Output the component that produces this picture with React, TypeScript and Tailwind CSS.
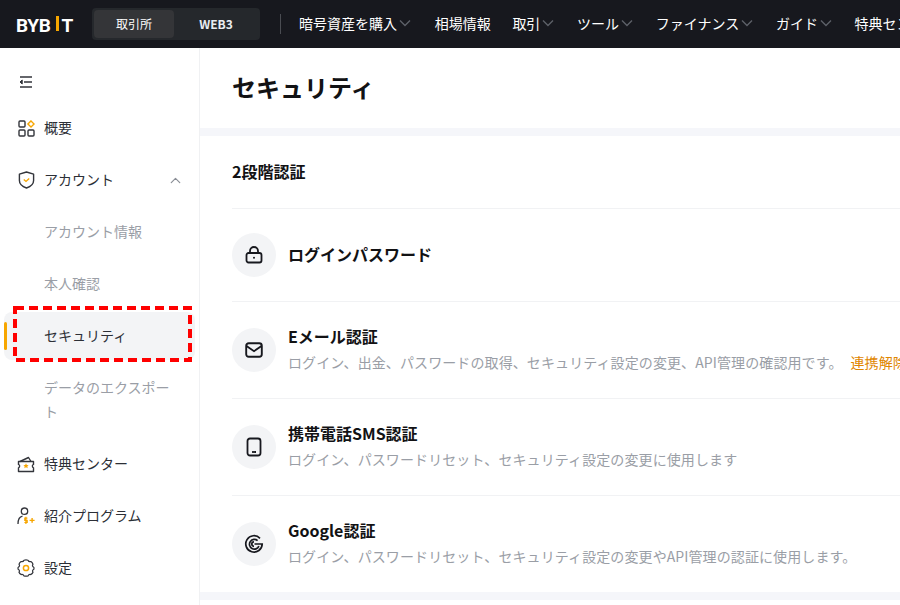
import React from "react";
import { ChevronUp } from "lucide-react";

function NavItem({ label, chevron, className }: { label: string; chevron?: boolean; className?: string }) {
  return (
    <div className={`flex items-center shrink-0 text-white text-[14px] whitespace-nowrap ${className ?? ""}`}>
      <span>{label}</span>
      {chevron && (
        <svg className="ml-[1px] shrink-0" width="14" height="14" viewBox="0 0 14 14" fill="none" stroke="#5d6068" strokeWidth="1.4">
          <path d="M2 4.5 7 9.5 12 4.5" />
        </svg>
      )}
    </div>
  );
}

function Header() {
  return (
    <header className="h-12 shrink-0 bg-[#17181e] flex items-center pl-4 overflow-hidden">
      <div className="flex items-end text-white font-bold text-[19px] leading-[19px] w-[76px] shrink-0 font-['Roboto',sans-serif] pt-[2px]">
        <span className="tracking-[-0.3px]">BYB</span>
        <span className="w-[3px] h-[15px] bg-[#f7a600] ml-[5px] mr-[3px] mb-[4px]"></span>
        <span>T</span>
      </div>
      <div className="w-[168px] h-8 shrink-0 rounded bg-[#25282c] p-[2px] flex text-[12px] text-white">
        <div className="w-[80px] rounded bg-[#343538] flex items-center justify-center">取引所</div>
        <div className="flex-1 flex items-center justify-center font-semibold text-[#e9edf2]">WEB3</div>
      </div>
      <div className="w-px h-5 bg-[#4a4c52] ml-[20px] mr-[18px] shrink-0"></div>
      <div className="flex items-center gap-[21.7px] pb-[2px]">
        <NavItem label="暗号資産を購入" chevron className="mr-[1px]" />
        <NavItem label="相場情報" />
        <NavItem label="取引" chevron />
        <NavItem label="ツール" chevron />
        <NavItem label="ファイナンス" chevron />
        <NavItem label="ガイド" chevron />
        <NavItem label="特典センター" />
      </div>
    </header>
  );
}

function SideItem({ icon, label, trailing }: { icon: React.ReactNode; label: string; trailing?: React.ReactNode }) {
  return (
    <div className="h-[52px] flex items-center pl-[17px] pr-[15px] text-[14px] text-[#2c2f36]">
      <span className="w-[18px] h-[18px] mr-[9px] flex items-center justify-center shrink-0">{icon}</span>
      <span className="flex-1 pb-[2px]">{label}</span>
      {trailing}
    </div>
  );
}

function SubItem({ label }: { label: string }) {
  return <div className="h-[52px] flex items-center pl-11 pb-[2px] text-[14px] text-[#9a9ea6]">{label}</div>;
}

const GridIcon = (
  <svg width="17" height="17" viewBox="0 0 17 17" fill="none" stroke="#33353b" strokeWidth="1.4">
    <rect x="1" y="1" width="6" height="6" rx="1" />
    <rect x="1" y="10" width="6" height="6" rx="1" />
    <rect x="10" y="10" width="6" height="6" rx="1" />
    <path d="M13 .9 16.1 4 13 7.1 9.9 4Z" stroke="#f7a600" />
  </svg>
);
const ShieldIcon = (
  <svg width="17" height="18" viewBox="0 0 17 18" fill="none">
    <path d="M8.5 1 15.6 3.2V9.5C15.6 13 12.6 15.6 8.5 17 4.4 15.6 1.4 13 1.4 9.5V3.2Z" stroke="#33353b" strokeWidth="1.4" strokeLinejoin="round" />
    <path d="M5.8 8.4 8 10.4 11.2 7.4" stroke="#f7a600" strokeWidth="1.4" />
  </svg>
);
const GiftIcon = (
  <svg width="18" height="17" viewBox="0 0 18 17" fill="none">
    <path d="M3 5.5 11.5 1.5 14 5.5" stroke="#33353b" strokeWidth="1.4" strokeLinejoin="round" />
    <path d="M1.5 5.5H16.5V8.4C15 8.8 15 11.2 16.5 11.8V15.5H1.5V11.8C3 11.2 3 8.8 1.5 8.4Z" stroke="#33353b" strokeWidth="1.4" strokeLinejoin="round" />
    <path d="M9 7.2 9.8 9 11.6 9.2 10.3 10.4 10.7 12.2 9 11.3 7.3 12.2 7.7 10.4 6.4 9.2 8.2 9Z" fill="#f7a600" />
  </svg>
);
const ReferralIcon = (
  <svg width="18" height="18" viewBox="0 0 18 18" fill="none">
    <circle cx="7.5" cy="4.2" r="3.2" stroke="#33353b" strokeWidth="1.3" />
    <path d="M1 17C1 12.5 2.5 9.8 5.5 9.2" stroke="#33353b" strokeWidth="1.3" />
    <path d="M10.4 11.2H7.8V13.3H10.2V15.5H7.4M8.9 9.8V17" stroke="#f7a600" strokeWidth="1.2" />
    <path d="M12.6 13.4H17.6M15.1 11V15.8" stroke="#f7a600" strokeWidth="1.4" />
  </svg>
);
const GearIcon = (
  <svg width="18" height="18" viewBox="0 0 18 18" fill="none">
    <path d="M7 1.2C8 .8 10 .8 11 1.2 11.6 2.6 12.4 3 13.9 2.6 14.8 3.2 15.6 4.2 16 5.2 15.2 6.4 15.2 7.4 16.9 8.4 17 9 17 9.6 16.9 10.2 15.4 11 15.2 12 16 13.2 15.6 14.2 14.8 15 13.9 15.6 12.4 15.2 11.6 15.6 11 16.9 10 17.2 8 17.2 7 16.9 6.4 15.6 5.6 15.2 4.1 15.6 3.2 15 2.4 14.2 2 13.2 2.8 12 2.6 11 1.1 10.2 1 9.6 1 9 1.1 8.4 2.8 7.4 2.8 6.4 2 5.2 2.4 4.2 3.2 3.2 4.1 2.6 5.6 3 6.4 2.6 7 1.2Z" stroke="#33353b" strokeWidth="1.2" strokeLinejoin="round" />
    <circle cx="9" cy="9" r="2.6" stroke="#f7a600" strokeWidth="1.5" />
  </svg>
);

function Sidebar() {
  return (
    <aside className="w-[200px] shrink-0 border-r border-[#f0f1f3] bg-white overflow-hidden">
      <div className="h-[54px] pt-[14px] flex items-center pl-[19px]">
        <svg width="14" height="14" viewBox="0 0 14 14" fill="none" stroke="#33353b" strokeWidth="1.6">
          <path d="M1 2H13M5 7H13M1 12H13" />
          <path d="M3.2 5 1 7 3.2 9Z" fill="#33353b" strokeWidth="1" />
        </svg>
      </div>
      <SideItem icon={GridIcon} label="概要" />
      <SideItem icon={ShieldIcon} label="アカウント" trailing={<ChevronUp className="text-[#8a8e96]" size={17} strokeWidth={1.7} />} />
      <SubItem label="アカウント情報" />
      <SubItem label="本人確認" />
      <div className="relative h-[48px] my-[2px] ml-1 mr-1 rounded-lg bg-[#f3f4f6] flex items-center pl-10 pb-[2px] text-[14px] text-[#2c2f36]">
        <span className="absolute left-0 top-[10px] w-[3px] h-[28px] rounded-full bg-[#f7a600]"></span>
        <svg className="absolute left-[9px] -top-[6px]" width="179" height="56" fill="none">
          <rect x="2" y="2" width="175" height="52" stroke="#ff0000" strokeWidth="4" strokeDasharray="9 5" />
        </svg>
        <span className="relative">セキュリティ</span>
      </div>
      <div className="pt-[13px] pb-[15px] pl-11 pr-6 text-[14px] leading-6 text-[#9a9ea6]">データのエクスポート</div>
      <SideItem icon={GiftIcon} label="特典センター" />
      <SideItem icon={ReferralIcon} label="紹介プログラム" />
      <SideItem icon={GearIcon} label="設定" />
    </aside>
  );
}

function RowIcon({ children }: { children: React.ReactNode }) {
  return <div className="w-11 h-11 shrink-0 rounded-full bg-[#f3f4f6] flex items-center justify-center text-[#17181e]">{children}</div>;
}

function Row({ icon, title, desc, link, h, border }: { icon: React.ReactNode; title: string; desc?: string; link?: string; h: string; border?: boolean }) {
  return (
    <div className={`${h} flex items-center gap-3 whitespace-nowrap ${border ? "border-b border-[#f1f2f4]" : ""}`}>
      <RowIcon>{icon}</RowIcon>
      <div className="min-w-0 pb-[1px]">
        <div className={`text-[16px] leading-[25px] font-bold text-[#121214] ${desc ? "" : "pb-[1px]"}`}>{title}</div>
        {desc && (
          <div className="mt-[1px] text-[14px] leading-[25px] tracking-[0.1px] text-[#9a9ea6]">
            {desc}
            {link && <span className="ml-[8px] text-[#e08600]">{link}</span>}
          </div>
        )}
      </div>
    </div>
  );
}

function Main() {
  return (
    <main className="flex-1 min-w-0 bg-white overflow-hidden">
      <div className="h-20 flex items-center pl-8 pb-[3px] text-[24px] font-bold text-[#121214]">セキュリティ</div>
      <div className="h-2 bg-[#f5f6fa]"></div>
      <div className="pl-8">
        <div className="h-[73px] flex items-center border-b border-[#f1f2f4] pb-[2px] text-[16px] font-bold text-[#121214]">2段階認証</div>
        <Row h="h-[93px]" border icon={
          <svg width="18" height="18" viewBox="0 0 18 18" fill="none" stroke="currentColor" strokeWidth="1.8"><rect x="1.5" y="7" width="15" height="9.5" rx="2" /><path d="M5 7V5a4 4 0 0 1 8 0v2" /><circle cx="9" cy="11.8" r="1" fill="currentColor" stroke="none" /></svg>
        } title="ログインパスワード" />
        <Row h="h-[97px]" border icon={
          <svg width="18" height="16" viewBox="0 0 18 16" fill="none" stroke="currentColor" strokeWidth="1.9"><rect x="1.2" y="1.2" width="15.6" height="13.6" rx="2.5" /><path d="M1.5 4 9 9.2 16.5 4" /></svg>
        } title="Eメール認証" desc="ログイン、出金、パスワードの取得、セキュリティ設定の変更、API管理の確認用です。" link="連携解除" />
        <Row h="h-[97px]" border icon={
          <svg width="18" height="20" viewBox="0 0 18 20" fill="none" stroke="currentColor" strokeWidth="1.8"><rect x="2.5" y="1.5" width="13" height="17" rx="2.5" /><path d="M7 15H11" /></svg>
        } title="携帯電話SMS認証" desc="ログイン、パスワードリセット、セキュリティ設定の変更に使用します" />
        <Row h="h-[96px]" icon={
          <svg width="20" height="20" viewBox="0 0 20 20" fill="none" stroke="currentColor" strokeWidth="1.7"><path d="M16 4.3A8.2 8.2 0 1 0 18.2 10H10.5" /><path d="M13.6 6.6A4.9 4.9 0 1 0 14.9 12.2" /><path d="M10 7.9A2.2 2.2 0 1 0 10 12.3" /></svg>
        } title="Google認証" desc="ログイン、パスワードリセット、セキュリティ設定の変更やAPI管理の認証に使用します。" />
      </div>
      <div className="h-2 bg-[#f5f6fa]"></div>
    </main>
  );
}

export default function App() {
  return (
    <div className="w-[900px] h-[605px] overflow-hidden flex flex-col bg-white font-['Noto_Sans_CJK_JP','Noto_Sans',sans-serif]">
      <Header />
      <div className="flex flex-1 min-h-0">
        <Sidebar />
        <Main />
      </div>
    </div>
  );
}
